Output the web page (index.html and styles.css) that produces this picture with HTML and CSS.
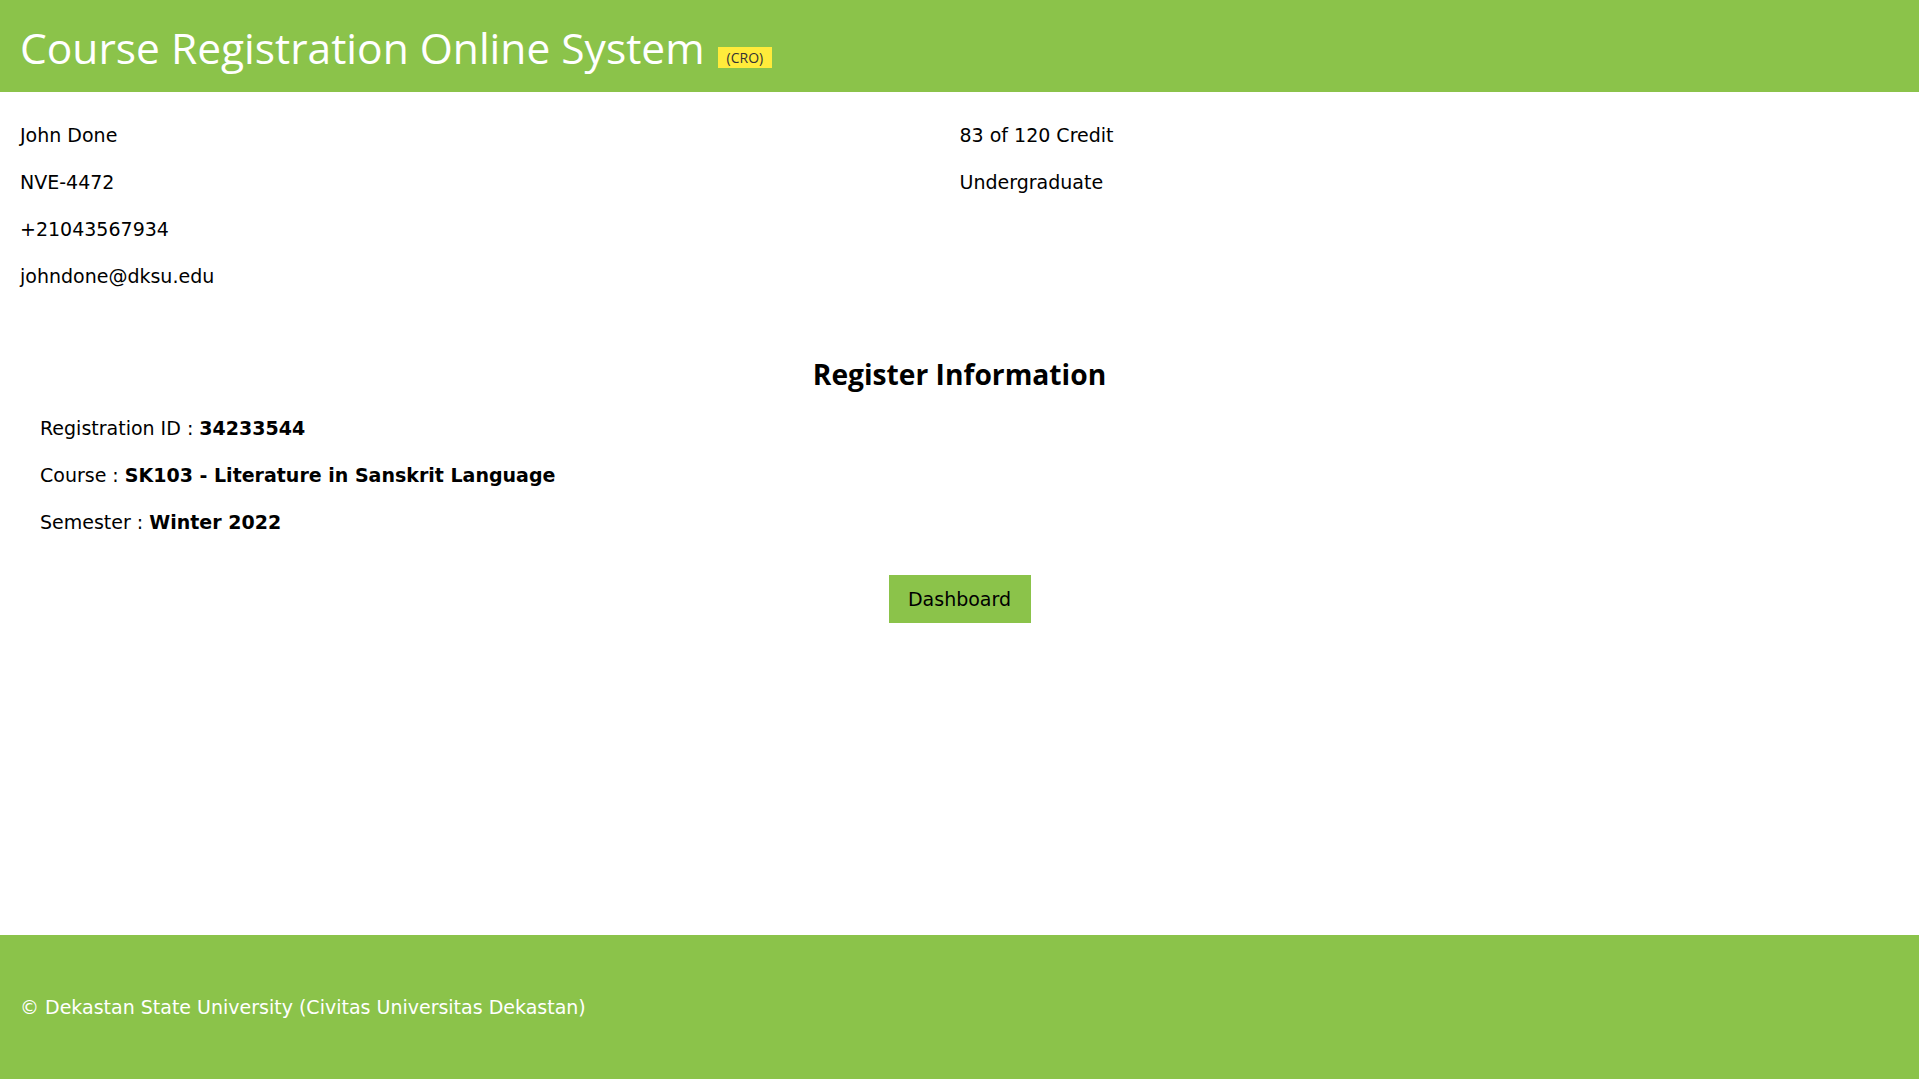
FILE: index.html
```html
<!DOCTYPE html>
<html lang="en">
<head>
<meta charset="utf-8">
<title>Course Registration Online System</title>
<link rel="stylesheet" href="styles.css">
</head>
<body>
<div class="page">
  <header class="topbar">
    <h1 class="title">Course Registration Online System <span class="badge">(CRO)</span></h1>
  </header>
  <main class="main">
    <section class="profile">
      <div class="col">
        <p class="line">John Done</p>
        <p class="line">NVE-4472</p>
        <p class="line">+21043567934</p>
        <p class="line">johndone@dksu.edu</p>
      </div>
      <div class="col">
        <p class="line">83 of 120 Credit</p>
        <p class="line">Undergraduate</p>
      </div>
    </section>
    <section class="register">
      <h2 class="heading">Register Information</h2>
      <div class="details">
        <p class="line">Registration ID : <b>34233544</b></p>
        <p class="line">Course : <b>SK103 - Literature in Sanskrit Language</b></p>
        <p class="line">Semester : <b>Winter 2022</b></p>
      </div>
      <div class="actions">
        <button class="btn">Dashboard</button>
      </div>
    </section>
  </main>
  <footer class="footer">
    <p class="copy">© Dekastan State University (Civitas Universitas Dekastan)</p>
  </footer>
</div>
</body>
</html>
```

FILE: styles.css
```css
* { box-sizing: border-box; }
html, body { margin: 0; padding: 0; }
body {
  font-family: "DejaVu Sans", Verdana, sans-serif;
  font-size: 19px;
  color: #000;
  background: #fff;
}
.page {
  min-height: 100vh;
  display: flex;
  flex-direction: column;
}
.topbar {
  background: #8bc34a;
  height: 92px;
  padding: 4px 20px 0;
  display: flex;
  align-items: center;
}
.title {
  margin: 0;
  font-family: "Open Sans", "Noto Sans", sans-serif;
  font-weight: 400;
  font-size: 42.5px;
  line-height: 1;
  color: #fff;
}
.badge {
  display: inline-block;
  background: #ffeb3b;
  color: #333;
  font-size: 14px;
  line-height: 21px;
  padding: 0 9px;
  vertical-align: 1px;
  margin-left: 2px;
}
.main {
  flex: 1;
  padding: 31px 20px 0;
}
.profile {
  display: grid;
  grid-template-columns: 1fr 1fr;
}
.col {
  display: flex;
  flex-direction: column;
  gap: 23px;
}
.line {
  margin: 0;
  line-height: 24px;
}
.register {
  margin-top: 68px;
}
.heading {
  margin: 0;
  text-align: center;
  font-family: "Open Sans", "Noto Sans", sans-serif;
  font-weight: 700;
  font-size: 28.2px;
  line-height: 36px;
}
.details {
  margin-top: 24px;
  padding-left: 20px;
  display: flex;
  flex-direction: column;
  gap: 23px;
}
.actions {
  margin-top: 41px;
  display: flex;
  justify-content: center;
}
.btn {
  background: #8bc34a;
  border: none;
  height: 48px;
  width: 142px;
  font-family: "DejaVu Sans", Verdana, sans-serif;
  font-size: 19px;
  color: #000;
  cursor: pointer;
}
.footer {
  background: #8bc34a;
  height: 144px;
  padding: 0 20px;
  display: flex;
  align-items: center;
}
.copy {
  margin: 0;
  color: #fff;
  font-family: "DejaVu Sans", Verdana, sans-serif;
  font-size: 19px;
}
```
